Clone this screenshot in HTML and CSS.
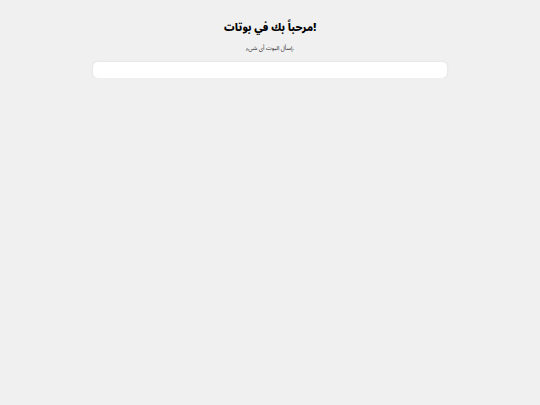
FILE: index.html
```html
<!DOCTYPE html>
<html lang="ar">
<head>
<meta charset="utf-8">
<link rel="stylesheet" href="styles.css">
</head>
<body>
<main class="page">
  <h1 class="title">مرحباً بك في بوتات!</h1>
  <p class="subtitle">إسأل البوت أي شيء.</p>
  <div class="chat-box"></div>
</main>
</body>
</html>
```
FILE: styles.css
```css
html, body {
  margin: 0;
  padding: 0;
  background: #f0f0f0;
  font-family: "Noto Sans Arabic", "Noto Naskh Arabic", "DejaVu Sans", sans-serif;
  color: #111;
}
.page {
  display: flex;
  flex-direction: column;
  align-items: center;
  padding-top: 19px;
}
.title {
  margin: 0;
  font-size: 10.3px;
  font-weight: 900;
  line-height: 18px;
  color: #000;
}
.subtitle {
  margin: 7px 0 0;
  font-size: 5.8px;
  line-height: 9px;
  color: #222;
}
.chat-box {
  margin-top: 9px;
  width: 354px;
  height: 16px;
  background: #fff;
  border-radius: 5px;
  box-shadow: 0 0 3px rgba(0,0,0,0.08);
}
```
